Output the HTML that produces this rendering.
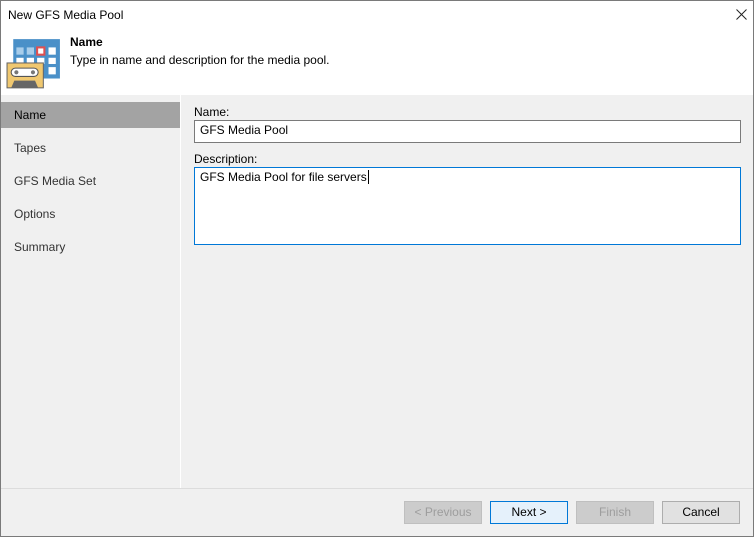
<!DOCTYPE html>
<html><head><meta charset="utf-8"><style>
*{margin:0;padding:0;box-sizing:border-box}
body{width:754px;height:537px;font-family:"Segoe UI","Liberation Sans",sans-serif;font-size:12px;color:#000;background:#fff;position:relative;overflow:hidden}
.win{position:absolute;left:0;top:0;width:754px;height:537px;border:1px solid #7a7a7a;background:#f0f0f0}
.title{position:absolute;left:0;top:0;width:752px;height:30px;background:#fff}
.ttl{position:absolute;left:7px;top:7px}
.hdr{position:absolute;left:0;top:29px;width:752px;height:65px;background:#fff}
.side{position:absolute;left:0;top:94px;width:180px;height:393px;background:#f0f0f0;border-right:1px solid #fff}
.side div{height:33px;line-height:26px;padding-left:13px;color:#333}
.side .sel{background:#a3a3a3;color:#000;height:26px;margin-top:7px;margin-bottom:7px}
.lbl{position:absolute;left:193px}
.inp{position:absolute;left:193px;width:547px;background:#fff;border:1px solid #7a7a7a;padding:2px 5px}
.foot{position:absolute;left:0;top:487px;width:752px;height:1px;background:#dcdcdc}
.btn{position:absolute;top:500px;width:78px;height:23px;border:1px solid #adadad;background:#e1e1e1;text-align:center;line-height:21px}
.dis{color:#9d9d9d;background:#cccccc;border-color:#bfbfbf}
</style></head><body><div class="win">
<div class="title"><span class="ttl">New GFS Media Pool</span>
<svg style="position:absolute;left:735px;top:8px" width="11" height="11"><path d="M0.5 0.5L10.5 10.5M10.5 0.5L0.5 10.5" stroke="#222" stroke-width="1"/></svg></div>
<div class="hdr">
<svg style="position:absolute;left:5px;top:8px" width="56" height="52" viewBox="0 0 54 50">
<rect x="7" y="1" width="45" height="38" fill="#4a90c8"/>
<g fill="#fff">
<rect x="10" y="9" width="7" height="7" fill="#a8cdea"/><rect x="20" y="9" width="7" height="7" fill="#a8cdea"/><rect x="30" y="9" width="7" height="7" fill="#fff" stroke="#e05050" stroke-width="2"/><rect x="41" y="9" width="7" height="7"/>
<rect x="10" y="19" width="7" height="6"/><rect x="20" y="19" width="7" height="6"/><rect x="30" y="19" width="7" height="6"/><rect x="41" y="19" width="7" height="6"/>
<rect x="41" y="28" width="7" height="7"/></g>
<rect x="1" y="24" width="35" height="24" fill="#f0c870" stroke="#666" stroke-width="1"/>
<rect x="5" y="29" width="26" height="8" rx="4" fill="#fff" stroke="#555"/>
<circle cx="10" cy="33" r="2" fill="#777"/><circle cx="26" cy="33" r="2" fill="#777"/>
<path d="M5 48 L8 41 H28 L31 48Z" fill="#666"/>
</svg>
<div style="position:absolute;left:69px;top:5px;font-weight:bold">Name</div>
<div style="position:absolute;left:69px;top:23px">Type in name and description for the media pool.</div>
</div>
<div class="side"><div class="sel">Name</div><div>Tapes</div><div>GFS Media Set</div><div>Options</div><div>Summary</div></div>
<div class="lbl" style="top:104px">Name:</div>
<div class="inp" style="top:119px;height:23px">GFS Media Pool</div>
<div class="lbl" style="top:151px">Description:</div>
<div class="inp" style="top:166px;height:78px;border-color:#0078d7">GFS Media Pool for file servers<span style="border-left:1px solid #000;margin-left:1px"></span></div>
<div class="foot"></div>
<div class="btn dis" style="left:403px">&lt; Previous</div>
<div class="btn" style="left:489px;border-color:#0078d7;background:#e5f1fb">Next &gt;</div>
<div class="btn dis" style="left:575px">Finish</div>
<div class="btn" style="left:661px">Cancel</div>
</div></body></html>
